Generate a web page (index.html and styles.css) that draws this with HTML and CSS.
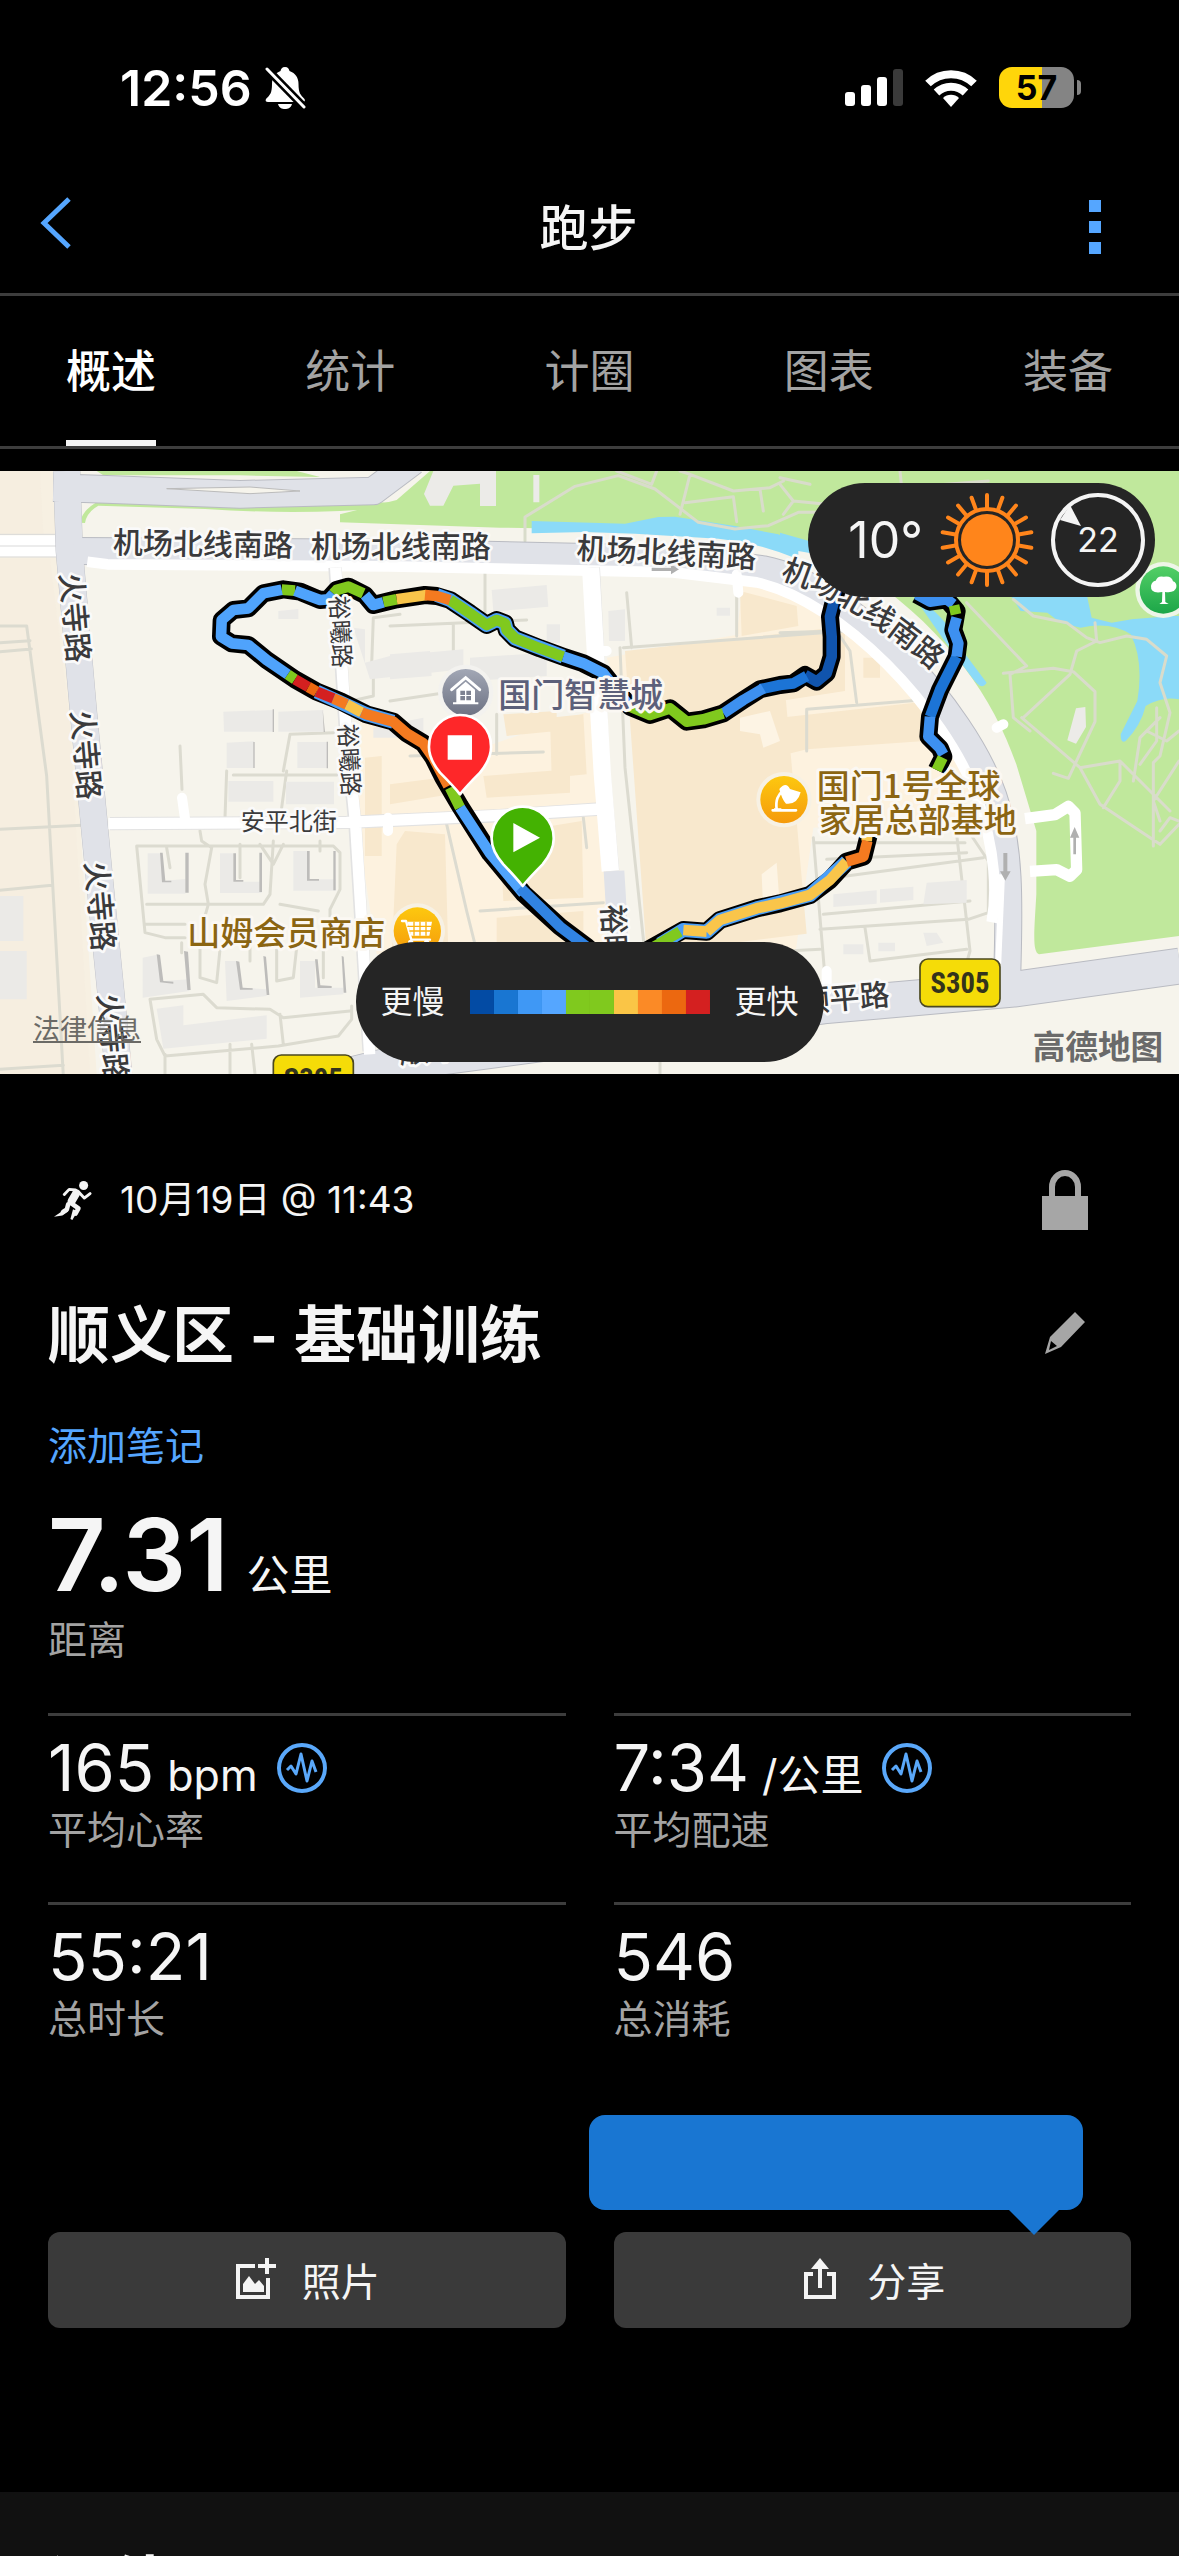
FILE: index.html
```html
<!DOCTYPE html>
<html lang="zh-CN">
<head>
<meta charset="utf-8">
<meta name="viewport" content="width=device-width, initial-scale=1">
<title>跑步</title>
<link rel="stylesheet" href="styles.css">
</head>
<body>
<div class="screen">
  <div class="status">
    <div class="status-left">
      <span class="clock">12:56</span>
      <svg class="bell" viewBox="0 0 42 44" aria-hidden="true">
        <path fill="#fff" d="M21 1c3 0 4 2 4.500 4 6 2 9 7 9 13 0 9 2 11 6 15 1 2 0 3-2 3H4c-2 0-3-1-2-3 4-4 6-6 6-15 0-6 3-11 8.500-13C17 3 18 1 21 1zM14 38h14c-1 4-4 5-7 5s-6-1-7-5z"/>
        <path stroke="#000" stroke-width="8" d="M1 1l40 41"/>
        <path stroke="#fff" stroke-width="3" stroke-linecap="round" d="M3 3l37 38"/>
      </svg>
    </div>
    <div class="status-right">
      <svg class="signal" viewBox="0 0 58 37" aria-hidden="true">
        <g fill="#fff"><rect y="23" width="10" height="14" rx="3"/><rect x="16" y="16" width="10" height="21" rx="3"/><rect x="32" y="8" width="10" height="29" rx="3"/></g>
        <rect x="48" width="10" height="37" rx="3" fill="#3a3a3a"/>
      </svg>
      <svg class="wifi" viewBox="0 0 52 38" aria-hidden="true">
        <g fill="none" stroke="#fff" stroke-width="8"><path d="M3 14.500a33 33 0 0 1 46 0"/><path d="M11.500 23.500a21 21 0 0 1 29 0"/></g>
        <path fill="#fff" d="M26 38l-8-9a11.500 11.500 0 0 1 16 0z"/>
      </svg>
      <div class="battery"><span class="battery-level">57</span></div>
    </div>
  </div>

  <header class="header">
    <button class="back" type="button" aria-label="返回">
      <svg viewBox="0 0 32 54"><path d="M29 3L4 27l25 24" fill="none" stroke="#55a6ff" stroke-width="5"/></svg>
    </button>
    <h1 class="header-title">跑步</h1>
    <button class="more" type="button" aria-label="更多">
      <svg viewBox="0 0 12 54" fill="#55a6ff"><path d="M0 0h12v12H0zM0 21h12v12H0zM0 42h12v12H0z"/></svg>
    </button>
  </header>

  <nav class="tabs">
    <a class="tab tab-active" href="#overview">概述</a>
    <a class="tab" href="#stats">统计</a>
    <a class="tab" href="#laps">计圈</a>
    <a class="tab" href="#charts">图表</a>
    <a class="tab" href="#gear">装备</a>
  </nav>

  <section class="map" id="overview">
    <svg class="map-canvas" viewBox="0 0 3537 1809" role="img" aria-label="跑步路线地图">
      <rect width="3537" height="1809" fill="#f6f4ec"/>
      <path fill="#f7f0e2" d="M0 0h160l24 260 46 640 60 909H0z"/>
      <path fill="#f5eddf" d="M0 0h120l10 190H0zM0 262h150l60 500 60 1047H0z" opacity=".6"/>
      <!-- warm commercial blocks -->
      <path fill="#fdf2df" d="M1080 730l100 20 120 130 470-160 40 240 80 490H1130l-60-400zM1820 560l510-90 190-120 240 230 190 310-70 150-440 30-60 420h-200l-100-300z"/>
      <path fill="#fdf2df" d="M2230 330l150 20 160 100-10 30-320 10z"/>
      <path fill="#f8e8cd" d="M1875 540l465-52 80 900-480 60-40-560zM2340 490l195-25v195l-195 30zM2340 740l500-55 10 120-430 30-80 20zM2220 360l170 45 5 60-170 30zM1510 730l160-10v60l-150 15zM1650 740l100-10 10 180-105 10zM1170 940l150-20 30 50-180 30zM1450 915l260-20v70l-250 15zM1190 1120l-15 340 170-10-10-360-120-10zM1500 1090l245-40 5 230-240 10zM1490 1340l260-20v110h-260zM1095 860l50-5v300h-50zM2600 560h40v60h-50v-60z"/>
      <path fill="#fdf4e4" d="M2220 740l90-20 30 90-50 20-10-40-60-10zM2285 1210l45-35 10 140-50 10z"/>
      <!-- parkland -->
      <path fill="#c0e89c" d="M1290 0h2247v1395l-420 55c-20-10-15-60-8-180V1080l-60-200c-70-200-200-390-440-560C2500 250 2300 200 2090 180l-590-10-480-16v-24l170-43z"/>
      <path fill="#c0e89c" d="M240 155q10-50 80-75l390 24 470-10-5 15q-250 25-560 5l-320-10q-35 20-40 52zM290 0h600l70 18-240-5-410 0z"/>
      <path fill="#ecebe8" d="M1300 0h188v105h-48V38l-80 6-30 60h-40l-18-35zM1600 12h18v82h-18zM3228 712l28-4 2 60-30 50-26-10z"/>
      <!-- water -->
      <path fill="#8bdaf8" d="M1595 150l280 8 100-20 50-1 180 28 130 25 60 30v45q-120-50-240-62l-250-15-150-5-160 4zM2340 185l140 40v30l-140-25zM2740 375q100 60 130 140l90 120q-15 25-40-10l-90-120z"/>
      <path fill="#8bdaf8" d="M3030 370h230l15 70 60 15 60-10 120-10h22v250q-50-10-100 20-15 60-60 105-15 10-15-20l50-100q20-120-20-200-60-40-150-20l-60-15-40-30-80-5z"/>
      <!-- park paths -->
      <g class="path-line" stroke="#d9dccb">
        <path d="M1575 210v-72l150-92 130-32 110 40 130 100 110 20 100-10 90-40 100 0"/>
        <path d="M1850 0l105 40 15-40M2040 0l30 10 130 50 110-10 40-20M2070 10l-30 120M2055 95l145-18 10 75M2280 55l10 65M2340 40l40 50 100 10M2380 90l-30 40M2340 20l90 20M2700 0l5 50 260-20"/>
        <path d="M2900 395l180 190-50 25 10 130 50 40M3040 385l60 50 100 20 60 45 40 15 80-20 60 10 60 50-20 80 30 90-30 130-20 20v250M3010 607l150-15 60 10 65 60 0 90-80 170-45-15M3070 740l140-130 20-70 60-30-5-55M3065 740l175 150 60 110 120 80 60 40 57-60M3240 890l120-20 150 150M3310 1010l50-80 0-60M3480 740l-60 60-20 130M3440 780l60 30 37-30M3420 880l50-70 0-100M3480 1050l-20-60 77-120M3480 1080l30-40 27 10"/>
      </g>
      <!-- minor lanes -->
      <g class="path-line" stroke="#dcdbd0">
        <path d="M0 465h80l60 450 50 900M0 515l90-6M0 542l94-8M0 1075l245-12M0 1258l155-15M0 1795l190-12M540 825l6 130M1170 465l410-18M1360 458v130M1455 300v130M1880 365l15 165M1870 530l670-50M2210 370v125M1860 530l15 360 60 560M1230 855l400-12M1490 850v-120M1340 1060l60 260 30 120M1440 1320l370-25M1750 1040l10 90M2340 485l170-5 40 60 20 155M2420 840v-125l370-30 30 60M1120 590v85l-90 20M1200 430l-80 10-5 140M850 900l20-110 130-5M1170 690l200-30"/>
        <path d="M410 1125h590l20 20 0 110-30 60v60M410 1125l25 260 60 15h60M440 1300h350l20-30 10-160M600 1080l5 30 30 20-20 110 10 60-20 70M780 1120l40 60 30-60M435 1360h120M500 1130l10 60M720 1120v100M960 1110v30M840 1300l115 20M600 1430v90l50 15 10-100M830 1430v100l50-10 10-90M450 1585l160-15 40 40 160 5 40 25 200-20M450 1585l20 120 25 50 340-30 180-30 40-50v-40M495 1750v59M690 1720v89M755 1720l10 89M840 1630l10 90M545 1415v30M750 1430v40M970 1430v90M680 900l-5 140M860 900l-15 110M700 912h310"/>
        <path d="M2445 1115h450M2500 1220l450-60M2480 1165l420-20M2470 1330l440-40M2460 1375l445-30 60-20V1170l-60-90M2440 1100l40 480M2870 1090l40 350-20 70M2595 1370l15 100 290-35M2360 1440l100-5M1980 1770v39"/>
      </g>
      <!-- buildings -->
      <g class="building">
        <path d="M670 722l150-5v65H672zM835 722l135-5v65H835zM680 815l82-4v80h-82zM892 813h90v78h-90zM835 420l60-6v30h-60zM1060 470l35 5v100l75-20 220-20v60l-280 30zM1120 770l150-30v60h-150z"/>
        <path d="M685 930h135v62H685zM858 932h144v68H858zM443 1147h38l10 82 65-5v44H443zM660 1147h40v85h85v34H660zM880 1140h42v85h85v34H880zM428 1460l50-10 10 80 80-5v35l-140 20zM675 1470l40 0 10 80 75 5v20l-120 15zM900 1470h45v80h85v20l-130 10zM470 1613l80-10v60l250-30v70l-310 30zM0 1275h70v135H0zM0 1440h80v145H0z"/>
        <path d="M1475 357l165-15 5 65-165 15zM1640 460h40v55h-40zM1410 560l230-15v70l-230 15zM1170 550l120-10 5 75-125 10zM1825 420l50-5v95h-48zM2150 410h40v24h-40zM2500 1270l130-12v40l-130 10zM2640 1255l100-8v40l-100 8zM2780 1235l120-8v68l-130 5zM2530 1420h60v30h-60zM2635 1415h50v26h-50zM2770 1385h40l20 30-50 10z"/>
      </g>
      <g fill="#bdbcba"><path d="M480 1145h8l8 84h18v5h-28zM556 1145h10v120h-10zM700 1147h8v80h22v5h-30zM778 1145h8v118h-8zM921 1140h8v84h28v5h-36zM1000 1140h7v118h-7zM470 1450l10 2 10 78 30 2v6l-40-4zM552 1440l12 2 8 115h-10zM708 1470l10 2 10 78 30 2v4h-38zM790 1455l8 2 10 115h-8zM945 1465l8 0 8 78 34 2v6h-42zM1025 1455l6 2 8 108h-8zM818 715h4v68h-4zM968 715l7 68h-4zM760 813h4v78h-4zM980 812h4v80h-4z"/></g>
      <!-- main roads -->
      <g fill="none" stroke-linejoin="round">
        <path stroke="#fff" stroke-width="32" d="M0 209h190M0 241h190"/><path stroke="#d9d9d9" stroke-width="3" d="M0 190h190M0 225h190M0 258h190"/>
        <path class="casing" stroke-width="86" d="M160 50l160 5 400 15 400 -10 120-90"/>
        <path class="casing" stroke-width="82" d="M200 0l8 240 42 480 46 480 36 360 24 249"/>
        <path class="casing" stroke-width="84" d="M230 240l940 5 900 20 220 30c260 50 600 420 690 680 50 150 50 300 40 590"/>
        <path class="casing" stroke-width="110" d="M900 1850l300-75 1270-170 570-50 500-70"/>
        <path class="road" stroke-width="80" d="M160 50l160 5 400 15 400 -10 120-90M200 0l8 240 42 480 46 480 36 360 24 249"/>
        <path class="road" stroke-width="78" d="M220 240l950 5 900 20 220 30c260 50 600 420 690 680 50 150 50 300 40 590"/>
        <path class="road" stroke-width="104" d="M900 1850l300-75 1270-170 570-50 500-70"/>
        <path stroke="#fff" stroke-width="32" d="M262 272l60 8 848 6 850 18 250 30c260 60 560 380 660 640 60 170 60 300 45 380"/>
        <path fill="#f6f4ec" stroke="#bbb" stroke-width="3" d="M500 53l250-5 150 12-150 8z"/>
        <path stroke="#e2e2e2" stroke-width="40" d="M1005 290l30 470 30 300 42 680M1780 290l30 600 28 310M330 1058l710-4 460-20 300-20"/>
        <path stroke="#fff" stroke-width="34" d="M1007 290l30 470 30 300 42 690M325 1058l715-4 440-20 320-20"/>
        <path stroke="#fff" stroke-width="52" d="M1772 290l35 620 24 290"/>
        <path stroke="#fff" stroke-width="30" stroke-linecap="round" d="M546 980l10 70M1164 1040v40M1800 540h20M2210 310l5 55M2990 770l20 -10M2480 1500v60"/>
        <path stroke="#e0e2e8" stroke-width="62" d="M1842 1200l15 250"/>
        <path stroke="#fff" stroke-width="34" d="M3075 1043l90-12 40-25 20 20 5 170-20 20-40-20-80 5"/>
        <path stroke="#fff" stroke-width="18" d="M3006 1210l-14 330"/>
      </g>
      <g fill="#b0b0b0"><path d="M1955 290h58v-10l24 15-24 15v-10h-58zM3220 1150v-50h-10l14-32 14 32h-10v50zM3010 1146v55h-10l16 28 16-28h-10v-55z"/></g>

      <!-- route: black casing, then pace-coloured segments -->
      <g class="route">
        <g stroke="#000" stroke-width="54">
          <path d="M2512 350L2490 437 2495 497 2495 557 2480 607 2450 632 2415 612 2380 637 2340 642 2280 655 2230 687 2170 727 2110 745 2060 752 2010 712 1950 732 1890 707 1810 607 1750 577 1690 557 1620 532 1545 502 1520 477 1515 457 1490 447 1460 462 1410 427 1350 387 1310 375 1275 372 1190 385 1120 402 1095 372 1045 347 1010 357 985 385 960 387 900 362 850 355 790 367 745 412 700 417 665 447 663 497 695 517 745 522 800 567 885 625 950 662 1020 690 1100 730 1180 752 1220 787 1270 817 1300 860 1330 920 1380 1005 1470 1147 1570 1267 1680 1367 1760 1427 1820 1480"/>
          <path d="M1920 1450L2050 1377 2120 1382 2160 1347 2270 1312 2340 1297 2430 1272 2490 1227 2540 1172 2590 1157 2605 1097V1050"/>
          <path d="M2810 897L2830 857 2820 832 2785 797 2790 737 2820 657 2870 557 2875 517 2860 477 2870 420 2840 385 2790 392 2750 370"/>
        </g>
        <path stroke="#4a9ff8" stroke-width="42" d="M1310 372L1350 387 1410 427 1460 462 1490 447 1515 457 1520 477 1545 502 1690 557M950 662L1100 730 1180 752M1980 1420L2050 1377 2120 1382 2160 1347 2270 1312 2430 1272 2540 1172"/>
        <g stroke-width="32">
          <path stroke="#1054ad" d="M2512 350L2490 437 2495 497 2495 557 2480 607 2450 632 2415 612"/>
          <path stroke="#1c74d6" d="M2420 615L2380 637 2340 642 2280 655M2870 557L2820 657 2790 737"/>
          <path stroke="#3d90f0" d="M2290 652L2230 687 2170 727M2870 440L2860 477 2875 517 2870 557M2790 737L2785 797 2820 832 2830 850M2860 400L2840 385 2790 392 2750 370"/>
          <path stroke="#80c91e" d="M2170 727L2110 745 2060 752 2010 712 1950 732 1890 707M1690 557L1620 532 1545 502 1520 477 1515 457 1490 447 1460 462 1410 427 1350 387M1190 385L1150 393M1090 367L1045 347 1010 357 1000 368M885 359L845 356M863 610L885 625M1350 950L1380 1010M1940 1440L2040 1382M2810 897L2828 860M2868 430L2862 403"/>
          <path stroke="#4fa3fc" d="M1890 707L1810 607 1750 577 1690 557M1150 394L1120 402 1095 372M1000 368L985 385 960 387 885 359M845 356L790 367 745 412 700 417 665 447 663 497 695 517 745 522 800 567 863 610M1380 1010L1470 1147 1570 1267"/>
          <path stroke="#3183e2" d="M1560 1250L1680 1367 1760 1427 1820 1480"/>
          <path stroke="#f9c54a" d="M1280 372L1190 385M1040 700L1085 724M2120 1382L2160 1347 2270 1312 2340 1297 2430 1272 2490 1227 2540 1172M2600 1110L2605 1050M2050 1377L2120 1382"/>
          <path stroke="#f47a20" d="M1350 387L1310 375 1275 372M1000 682L1040 700M1085 724L1100 730 1180 752 1220 787 1270 817 1300 860 1345 945M2540 1172L2590 1157 2602 1110"/>
          <path stroke="#d42020" d="M885 625L925 648M950 662L1000 682"/><path stroke="#ec6810" d="M925 648L950 662"/>
        </g>
      </g>

      <!-- labels -->
      <g class="road-label">
        <text x="338" y="247" transform="rotate(1 338 247)">机场北线南路</text>
        <text x="932" y="258">机场北线南路</text>
        <text x="1728" y="263" transform="rotate(3 1728 263)">机场北线南路</text>
        <path id="ring-road" fill="none" stroke="none" d="M2340 322Q2560 390 2800 600"/>
        <text><textPath href="#ring-road">机场北线南路</textPath></text>
        <text x="181" y="308" transform="rotate(85 181 308)">火寺路</text>
        <text x="214" y="720" transform="rotate(85 214 720)">火寺路</text>
        <text x="256" y="1174" transform="rotate(85 256 1174)">火寺路</text>
        <text x="294" y="1570" transform="rotate(85 294 1570)">火寺路</text>
        <text x="1806" y="1302" transform="rotate(87 1806 1302)">裕曦路</text>
        <text x="2402" y="1625" transform="rotate(-5 2402 1625)">顺平路</text>
        <text x="1200" y="1778" transform="rotate(-6 1200 1778)">顺平路</text>
      </g>
      <g class="road-label road-label-small">
        <text x="990" y="376" transform="rotate(87 990 376)">裕曦路</text>
        <text x="1016" y="760" transform="rotate(87 1016 760)">裕曦路</text>
        <text x="722" y="1077">安平北街</text>
      </g>
      <g class="place-label">
        <text x="1495" y="709" fill="#5c607a">国门智慧城</text>
        <text x="562" y="1422">山姆会员商店</text>
        <text x="2450" y="982">国门1号全球</text>
        <text x="2456" y="1082">家居总部基地</text>
      </g>
      <g class="road-sign">
        <rect x="2760" y="1464" width="240" height="143" rx="24"/><text x="2880" y="1566">S305</text>
        <rect x="820" y="1752" width="240" height="143" rx="24"/><text x="940" y="1854">S305</text>
      </g>
      <text class="brand" x="3098" y="1764">高德地图</text>

      <!-- place pins -->
      <defs>
        <linearGradient id="slate" x2="0" y2="1"><stop stop-color="#a2a7b5"/><stop offset="1" stop-color="#6d7283"/></linearGradient>
        <linearGradient id="amber" x2="0" y2="1"><stop stop-color="#fdc80f"/><stop offset="1" stop-color="#f59a0c"/></linearGradient>
        <linearGradient id="leaf" x2="0" y2="1"><stop stop-color="#53cf66"/><stop offset="1" stop-color="#1ca648"/></linearGradient>
      </defs>
      <g transform="translate(1397 664)"><circle r="83" fill="#f3f2ef"/><circle r="70" fill="url(#slate)"/>
        <path fill="none" stroke="#fff" stroke-width="9" stroke-linecap="round" d="M-42-8L0-44 42-8"/><path fill="#fff" d="M-28-8L0-32 28-8V30H38v6H-38V30H-28z"/><path fill="#7d8291" d="M-16-5h14V8h-14zM2-5h14V8H2zM-16 11h14V24h-14zM2 11h14V24H2z"/></g>
      <g transform="translate(1252 1380)"><circle r="83" fill="#f7f1e4"/><circle r="71" fill="url(#amber)"/>
        <path fill="none" stroke="#fff" stroke-width="7" stroke-linecap="round" stroke-linejoin="round" d="M-46-30h12l16 56h56"/><path fill="#fff" d="M-30-28h74L36 14h-54z"/><circle cx="-20" cy="34" r="8" fill="#fff"/><circle cx="28" cy="34" r="8" fill="#fff"/><path stroke="#fbb00d" stroke-width="4" d="M-30-14h72M-24 0h66M-10-28v42M8-28v42M26-28v42"/></g>
      <g transform="translate(2352 986)"><circle r="83" fill="#f7f1e4"/><circle r="71" fill="url(#amber)"/>
        <path stroke="#fff" stroke-width="8" stroke-linecap="round" fill="none" d="M-34 32h70M-22 30c-4-30 4-44 20-58"/><path fill="#fff" d="M-14-32q20-24 32 0l32 10q-10 38-44 34-12-12-20-44zM-30 26h22v6h-22z"/></g>
      <g transform="translate(3490 357)"><circle r="84" fill="#eef5e8"/><circle r="71" fill="url(#leaf)"/>
        <path fill="#fff" d="M-4 36l1-30q-36 6-34-18 2-14 14-16 6-16 24-12 24-4 28 14 12 4 10 18-4 18-34 14l1 30 10 6h-28z"/></g>
      <g stroke="#fff" stroke-width="8" stroke-linejoin="round">
        <path fill="#fe2729" d="M1380 970Q1360 945 1320 905 1285 862 1287 825A93 93 0 0 1 1473 825Q1475 862 1440 905 1400 945 1380 970z"/>
        <path fill="#44b202" d="M1568 1245Q1548 1220 1510 1180 1473 1137 1475 1100A93 93 0 0 1 1661 1100Q1663 1137 1628 1180 1588 1220 1568 1245z"/>
      </g>
      <path fill="#fff" d="M1343 793h73v73h-73zM1540 1056l80 44-80 44z"/>
    </svg>

    <div class="weather">
      <span class="temperature">10°</span>
      <svg class="weather-icon" viewBox="-48 -48 96 96" role="img" aria-label="晴">
        <circle r="26" fill="#ff851b"/><circle r="31" fill="none" stroke="#ff851b" stroke-width="4"/>
        <g stroke="#ff851b" stroke-width="4" stroke-linecap="round"><g id="rays"><path d="M0-32V-45M0 32V45"/><path d="M0-32V-45M0 32V45" transform="rotate(20)"/><path d="M0-32V-45M0 32V45" transform="rotate(40)"/></g><use href="#rays" transform="rotate(60)"/><use href="#rays" transform="rotate(120)"/></g>
      </svg>
      <div class="wind">
        <svg class="wind-arrow" viewBox="0 0 26 26" aria-hidden="true"><path fill="#f4f4f4" d="M13 2L3 17l21 6z"/></svg>
        22
      </div>
    </div>
    <div class="legend">
      <span>更慢</span>
      <span class="legend-bar"><i class="c1"></i><i class="c2"></i><i class="c3"></i><i class="c4"></i><i class="c5"></i><i class="c5"></i><i class="c6"></i><i class="c7"></i><i class="c8"></i><i class="c9"></i></span>
      <span>更快</span>
    </div>
    <a class="legal" href="#legal">法律信息</a>
  </section>

  <main class="details">
    <div class="row meta">
      <svg class="runner" viewBox="0 0 118 126" aria-hidden="true">
        <circle cx="92" cy="18" r="14" fill="#f4f4f4"/>
        <g fill="none" stroke="#f4f4f4" stroke-linecap="round" stroke-linejoin="round"><path stroke-width="9" d="M32 46l15-16 20 2M78 40l16 17 18-14"/><path stroke-width="25" d="M69 42L55 66"/><path stroke-width="14" d="M52 72l24 17-9 16M44 76l-4 16-12 8"/></g>
        <path fill="#f4f4f4" d="M73 98l-16 27-6-3 8-30zM38 88l6 11-18 12-26 4 26-18z"/>
      </svg>
      <time class="date">10月19日 @ 11:43</time>
      <button class="side" type="button" aria-label="隐私设置">
        <svg class="lock" viewBox="0 0 46 60"><path fill="#a6a6a6" d="M0 26h46v34H0z"/><path fill="none" stroke="#a6a6a6" stroke-width="6" d="M10 28V17a13 14 0 0 1 26 0v11"/></svg>
      </button>
    </div>
    <div class="row headline">
      <h2 class="name">顺义区 - 基础训练</h2>
      <button class="side" type="button" aria-label="编辑名称">
        <svg class="pencil" viewBox="0 0 40 42"><path fill="#a6a6a6" d="M30 0l10 10-24 25L0 42l5-17zM6 29l-2 9 8-4z" fill-rule="evenodd"/></svg>
      </button>
    </div>
    <a class="note" href="#note">添加笔记</a>

    <div class="distance">
      <p class="distance-value">7.31 <span class="unit">公里</span></p>
      <p class="label">距离</p>
    </div>

    <div class="grid">
      <div class="stat">
        <p class="value">165 <span class="unit">bpm</span>
          <svg class="pulse" viewBox="0 0 50 50" aria-hidden="true"><g fill="none" stroke="#5aa8fa" stroke-linejoin="round"><circle cx="25" cy="25" r="23" stroke-width="4"/><path stroke-width="3" d="M10 27l4-4 5 8 5-20 6 27 5-20 4 11"/></g></svg></p>
        <p class="label">平均心率</p>
      </div>
      <div class="stat">
        <p class="value">7:34 <span class="unit">/公里</span>
          <svg class="pulse" viewBox="0 0 50 50" aria-hidden="true"><g fill="none" stroke="#5aa8fa" stroke-linejoin="round"><circle cx="25" cy="25" r="23" stroke-width="4"/><path stroke-width="3" d="M10 27l4-4 5 8 5-20 6 27 5-20 4 11"/></g></svg></p>
        <p class="label">平均配速</p>
      </div>
      <div class="stat"><p class="value">55:21</p><p class="label">总时长</p></div>
      <div class="stat"><p class="value">546</p><p class="label">总消耗</p></div>
    </div>

    <div class="actions">
      <button class="action" type="button">
        <svg class="action-icon" viewBox="0 0 42 42" fill="none"><path stroke="#f4f4f4" stroke-width="4" d="M21 8H4v31h30V20M33 0v16M24 8h18"/><path fill="#f4f4f4" d="M9 34V26l6-8 6 8 4-4 5 6v6z"/></svg>
        照片
      </button>
      <button class="action" type="button">
        <svg class="action-icon" viewBox="0 0 42 42" fill="none"><path stroke="#f4f4f4" stroke-width="4" d="M14 16H7v23h28V16h-7M21 30V6"/><path fill="#f4f4f4" d="M21 0l9 11H12z"/></svg>
        分享
      </button>
      <div class="tooltip" role="tooltip"></div>
    </div>
  </main>

  <section class="evaluation"><h2 class="name">评估</h2></section>
</div>
</body>
</html>
```
FILE: styles.css
```css
* { box-sizing: border-box; }
body, h1, h2, p { margin: 0; }
body {
  background: #000;
  color: #f5f5f5;
  font-family: Inter, "Noto Sans CJK SC", sans-serif;
}
button { padding: 0; border: 0; background: none; color: inherit; font: inherit; cursor: pointer; }
a { color: inherit; text-decoration: none; }
svg { display: block; }

.screen { display: flex; flex-direction: column; height: 100vh; overflow: hidden; }
.screen > * { flex-shrink: 0; }

/* status bar */
.status {
  display: flex; align-items: center; justify-content: space-between;
  height: 160px; padding: 15px 98px 0 120px;
}
.status-left, .status-right { display: flex; align-items: center; }
.status-left { gap: 12px; }
.status-right { gap: 22px; }
.clock { font-size: 50px; font-weight: 600; line-height: 60px; color: #fff; }
.bell { width: 42px; height: 44px; }
.signal { width: 58px; height: 37px; }
.wifi { width: 52px; height: 38px; }
.battery {
  position: relative; width: 75px; height: 41px; margin-right: 7px; border-radius: 13px;
  background: linear-gradient(90deg, #ffd60a 57%, #848484 57%);
  color: #000; text-align: center;
}
.battery::after {
  content: ""; position: absolute; left: 78px; top: 13px; width: 4px; height: 15px;
  border-radius: 0 4px 4px 0; background: #848484;
}
.battery-level { font-size: 34px; font-weight: 700; line-height: 41px; }

/* title bar */
.header {
  display: grid; grid-template-columns: 1fr auto 1fr; align-items: center;
  height: 136px; padding: 4px 78px 0 40px; border-bottom: 3px solid #3d3d3d;
}
.header-title { padding-left: 36px; font-size: 49px; font-weight: 500; line-height: 64px; }
.back { justify-self: start; padding-bottom: 12px; }
.more { justify-self: end; padding-bottom: 4px; }
.back svg { width: 32px; height: 54px; }
.more svg { width: 12px; height: 54px; }

/* tabs */
.tabs {
  display: flex; justify-content: space-between;
  padding: 0 66px; margin-bottom: 22px; border-bottom: 3px solid #3d3d3d;
}
.tab { height: 150px; font-size: 45px; line-height: 152px; color: #a3a3a3; }
.tab-active { color: #fff; font-weight: 500; border-bottom: 6px solid #f4f4f4; }

/* map */
.map { position: relative; }
.map-canvas { width: 100%; height: auto; }
.path-line { fill: none; stroke-width: 9; stroke-linejoin: round; stroke-linecap: round; }
.building { fill: #ebeae7; }
.casing { stroke: #b9bbc2; }
.road { stroke: #e0e2e8; }
.route { fill: none; stroke-linejoin: round; }
.map-canvas text { font-family: "Noto Sans CJK SC", sans-serif; paint-order: stroke; stroke-linejoin: round; }
.road-label { font-size: 90px; font-weight: 500; fill: #3a3a3c; stroke: #fafafa; stroke-width: 16px; }
.road-label-small { font-size: 72px; font-weight: 400; }
.place-label { font-size: 99px; font-weight: 500; fill: #8b6512; stroke: #fbf8f3; stroke-width: 18px; }
.road-sign rect { fill: #f5dc08; stroke: #4b4820; stroke-width: 5px; }
.map-canvas .road-sign text {
  font-family: "Liberation Sans Narrow", "Roboto Condensed", "Liberation Sans", sans-serif;
  font-size: 86px; font-weight: 700; fill: #33331c; text-anchor: middle;
}
.brand { font-size: 98px; font-weight: 700; fill: #6a6a6a; }

.weather {
  position: absolute; top: 12px; right: 24px;
  display: flex; align-items: center; gap: 16px;
  height: 114px; padding: 0 10px 0 40px; border-radius: 57px; background: #252525;
}
.temperature { font-size: 50px; line-height: 60px; }
.weather-icon { width: 96px; height: 96px; }
.wind {
  position: relative; width: 94px; height: 94px; border: 4px solid #f4f4f4; border-radius: 50%;
  font-size: 34px; line-height: 86px; text-align: center;
}
.wind-arrow { position: absolute; left: 2px; top: 6px; width: 26px; height: 26px; }

.legend {
  position: absolute; bottom: 12px; left: 50%; transform: translateX(-50%);
  display: flex; align-items: center; gap: 25px;
  height: 120px; padding: 0 25px; border-radius: 60px; background: #252525;
  font-size: 32px; line-height: 48px; white-space: nowrap;
}
.legend-bar { display: grid; grid-template-columns: repeat(10, 24px); height: 24px; }
.c1 { background: #034ba4; }
.c2 { background: #1976d2; }
.c3 { background: #3f98f5; }
.c4 { background: #55a6ff; }
.c5 { background: #80c91e; }
.c6 { background: #fac546; }
.c7 { background: #fb8a26; }
.c8 { background: #ec6810; }
.c9 { background: #d42020; }
.legal {
  position: absolute; left: 33px; bottom: 24px;
  font-size: 27px; line-height: 40px; color: #6b6a66; text-decoration: underline;
}

/* activity details */
.details { display: flex; flex-direction: column; padding: 96px 48px 0; }
.row { display: flex; align-items: center; padding-right: 42px; }
.side { display: flex; justify-content: center; align-items: center; width: 48px; margin-left: auto; }
.meta { height: 60px; margin-bottom: 64px; }
.headline { margin-bottom: 50px; }
.runner { width: 38px; height: 42px; margin: 0 28px 0 6px; }
.date { font-size: 37px; line-height: 48px; }
.lock { width: 46px; height: 60px; }
.pencil { width: 40px; height: 42px; }
.name { padding-top: 6px; font-size: 62px; font-weight: 600; line-height: 72px; }
.note { align-self: flex-start; font-size: 39px; line-height: 48px; color: #55a6ff; }
.label { font-size: 39px; line-height: 48px; color: #a3a3a3; }
.unit { font-size: 43px; font-weight: 400; line-height: 48px; }
.distance { margin: 24px 0 49px; }
.distance-value {
  display: flex; align-items: baseline; gap: 18px;
  font-size: 100px; font-weight: 600; line-height: 122px;
}

.grid { display: grid; grid-template-columns: 1fr 1fr; column-gap: 48px; }
.stat { padding: 13px 0 48px; border-top: 3px solid #3d3d3d; }
.value { display: flex; align-items: baseline; gap: 13px; font-size: 65px; line-height: 77px; }
.pulse { align-self: center; width: 50px; height: 50px; margin-left: 6px; }

.actions {
  position: relative;
  display: grid; grid-template-columns: 1fr 1fr; column-gap: 48px;
  margin: 141px 0 164px;
}
.action {
  display: flex; align-items: center; justify-content: center; gap: 26px;
  height: 96px; padding-bottom: 2px; border-radius: 12px; background: #3a3a3a; font-size: 39px;
}
.action-icon { width: 42px; height: 42px; }
.tooltip {
  position: absolute; right: 48px; bottom: 118px; width: 494px; height: 95px;
  border-radius: 16px; background: #1976d2;
}
.tooltip::after {
  content: ""; position: absolute; right: 24px; top: 95px;
  border: 25px solid transparent; border-top-color: #1976d2; border-bottom: 0;
}

.evaluation { padding: 52px 48px; background: #111; }
```
